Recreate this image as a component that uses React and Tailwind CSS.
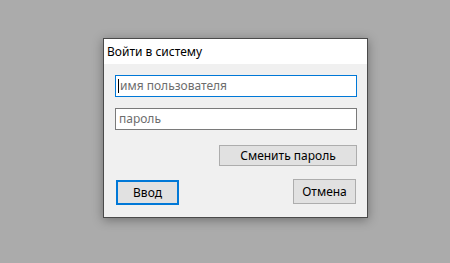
import React from "react";

const font = { fontFamily: '"Noto Sans", "Open Sans", sans-serif' };

export default function App() {
  return (
    <div className="w-[450px] h-[263px] bg-[#ababab] pt-[38px] pl-[103px]" style={font}>
      {/* login dialog */}
      <div className="w-[265px] h-[180px] border border-[#4a4a4a] bg-[#f0f0f0] shadow-[0_2px_10px_rgba(0,0,0,0.35)] flex flex-col">
        <div className="h-[25px] bg-white flex items-center pl-[3px] text-[12px] text-black">
          Войти в систему
        </div>

        <div className="flex flex-col pl-[11px] pr-[10px] pt-[11px]">
          <div className="h-[22px] border border-[#0078d7] bg-white flex items-center pl-[2px] text-[12px] text-[#6d6d6d]">
            <span className="w-px h-[14px] bg-black mr-px" />
            имя пользователя
          </div>
          <div className="mt-[11px] h-[22px] border border-[#7a7a7a] bg-white flex items-center pl-[3px] text-[12px] text-[#6d6d6d]">
            пароль
          </div>

          <div className="mt-[15px] flex justify-end">
            <button className="w-[138px] h-[21px] border border-[#adadad] bg-[#e1e1e1] text-[12px] text-black flex items-center justify-center">
              Сменить пароль
            </button>
          </div>

          <div className="mt-[14px] flex justify-between items-start">
            <button className="ml-px w-[63px] h-[25px] border-2 border-[#0078d7] bg-[#e1e1e1] text-[12px] text-black flex items-center justify-center">
              Ввод
            </button>
            <button className="-mt-px mr-px w-[63px] h-[25px] border border-[#adadad] bg-[#e1e1e1] text-[12px] text-black flex items-center justify-center">
              Отмена
            </button>
          </div>
        </div>
      </div>
    </div>
  );
}
